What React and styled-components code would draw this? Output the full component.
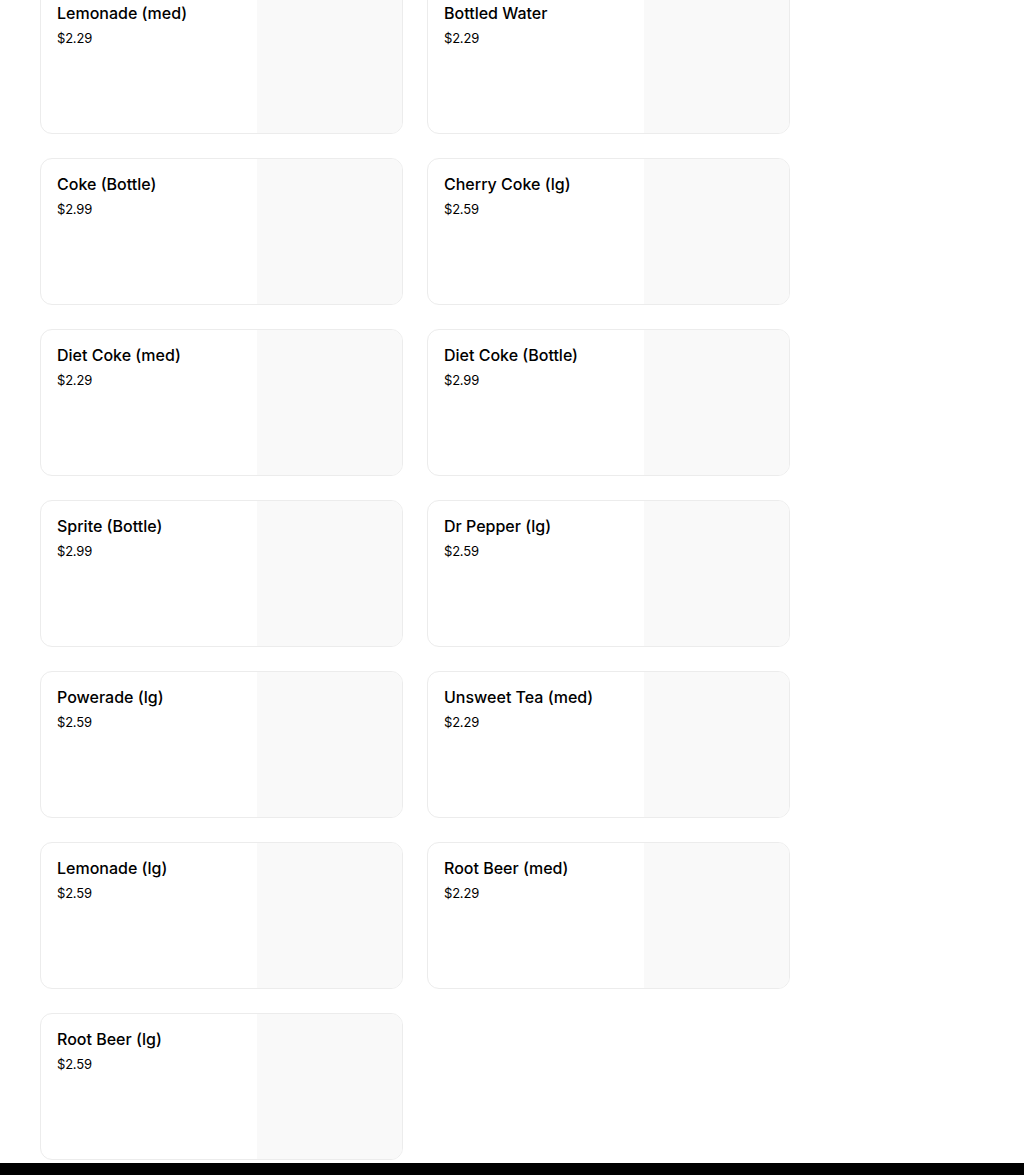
import React from 'react'
import styled, { createGlobalStyle } from 'styled-components';

const items = [
    { name: 'Lemonade (med)', price: '$2.29' },
    { name: 'Bottled Water', price: '$2.29' },
    { name: 'Coke (Bottle)', price: '$2.99' },
    { name: 'Cherry Coke (lg)', price: '$2.59' },
    { name: 'Diet Coke (med)', price: '$2.29' },
    { name: 'Diet Coke (Bottle)', price: '$2.99' },
    { name: 'Sprite (Bottle)', price: '$2.99' },
    { name: 'Dr Pepper (lg)', price: '$2.59' },
    { name: 'Powerade (lg)', price: '$2.59' },
    { name: 'Unsweet Tea (med)', price: '$2.29' },
    { name: 'Lemonade (lg)', price: '$2.59' },
    { name: 'Root Beer (med)', price: '$2.29' },
    { name: 'Root Beer (lg)', price: '$2.59' },
]

const GlobalStyle = createGlobalStyle`
    html, body {
        margin: 0;
        padding: 0;
        background: #ffffff;
        font-family: Inter, "Noto Sans", sans-serif;
        color: #000000;
        overflow: hidden;
    }
`;

const App = () => {
    return (
        <>
            <GlobalStyle />
            <StyledPage>
                <div className="menu-grid">
                    {items.map((item) => (
                        <ItemCard key={item.name}>
                            <div className="item-info">
                                <h3 className="item-name">{item.name}</h3>
                                <span className="item-price">{item.price}</span>
                            </div>
                            <div className="item-image" />
                        </ItemCard>
                    ))}
                </div>
                <Footer />
            </StyledPage>
        </>
    )
}

const StyledPage = styled.div`
    height: 1175px;
    overflow: hidden;

.menu-grid{
    width: 750px;
    margin: -13px 0 0 40px;
    display: grid;
    grid-template-columns: 1fr 1fr;
    column-gap: 24px;
    row-gap: 24px;
    padding-bottom: 3px;
}
`;

const ItemCard = styled.div`
    display: flex;
    height: 147px;
    box-sizing: border-box;
    border: 1px solid #ececec;
    border-radius: 12px;
    overflow: hidden;
    background: #ffffff;

.item-info{
    flex: 1;
    padding: 13px 16px;
}
.item-name{
    margin: 0;
    font-size: 16px;
    font-weight: 500;
    line-height: 24px;
    letter-spacing: 0;
}
.item-price{
    display: block;
    margin-top: 3px;
    font-size: 13px;
    line-height: 20px;
    font-weight: 400;
    letter-spacing: -0.2px;
}
.item-image{
    width: 145px;
    flex-shrink: 0;
    background: #f9f9f9;
}
`;

const Footer = styled.div`
    height: 40px;
    background: #000000;
`;

export default App
